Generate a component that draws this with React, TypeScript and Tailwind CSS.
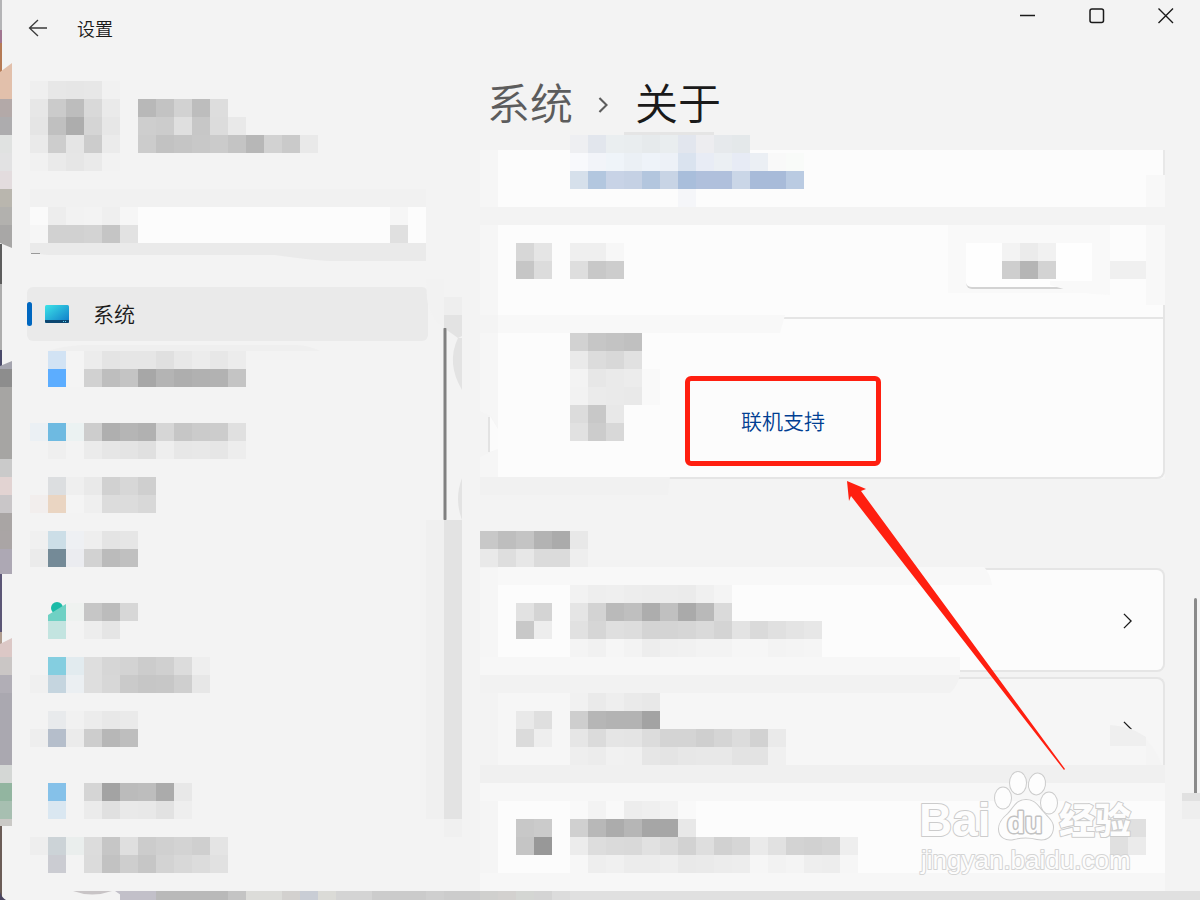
import React from "react";

const CELL = 18;

function Mosaic({ rows, className = "" }: { rows: string[]; className?: string }) {
  const grid = rows.map((row) => row.split(" ").filter(Boolean));
  const columns = Math.max(1, ...grid.map((row) => row.length));
  return (
    <svg
      aria-hidden="true"
      width={columns * CELL}
      height={rows.length * CELL}
      shapeRendering="crispEdges"
      className={`block shrink-0 ${className}`}
    >
      {grid.map((row, y) =>
        row.map((token, x) =>
          token === ".." ? null : (
            <rect
              key={`${x}-${y}`}
              x={x * CELL}
              y={y * CELL}
              width={CELL}
              height={CELL}
              fill={token.length === 2 ? `#${token}${token}${token}` : `#${token}`}
            />
          ),
        ),
      )}
    </svg>
  );
}

const navItems: string[][] = [
  [
    ".. d2e3f4 f4 ec e4 e6 e6 e0 e8 ec e7 ec",
    ".. 5cadff f4 d1 be c4 a7 b4 ae b1 b2 c4",
    "",
    "",
  ],
  [
    "ebf0f4 6ebae1 ebf2f2 cd af b5 b1 d6 c6 cb cc e0",
    ".. ef .. eb e6 e4 e0 ee e7 e8 e6 ed",
    "",
  ],
  [".. dcdee0 ef e9 d1 d7 cf", "f2eeed ead5c2 f4 ef dc dc d8", ""],
  ["f0 ccdee7 eef0f3 ee e4 e6", "eb 748a97 ebecf0 d2 bb c0", "", ""],
  [".. .. eff2f0 c6 bc d7", ".. c3e4e0 .. ed e5", ""],
  [
    ".. 84cee0 e2ebef de d6 d3 cc d0 dc ee",
    "f0 c5d5df ebeff2 de d7 ca c6 c7 cf e7",
    "",
  ],
  [".. e8eaec f1 ec e8 ea", "ee b5becb eb cd b7 be", "", ""],
  [".. 85c1e9 .. d5 a3 bb bd ab e8", ".. dae7f1 .. eb e0 e9 e8 e2 ee", ""],
  [
    "ee ccd3d7 eaeeed dc c6 df cc d0 d3 cf e4",
    ".. cbccd2 .. db c2 ce c6 d3 d8 dc e1",
    "",
  ],
];

function DesktopEdge() {
  const blocks: [number, number, string][] = [
    [99, 117, "#b3a9a8"],
    [117, 135, "#adacae"],
    [135, 153, "#e0e2e1"],
    [153, 171, "#e2e2e3"],
    [171, 189, "#e3dcde"],
    [189, 207, "#b9b6ae"],
    [207, 225, "#b2b1ae"],
    [369, 387, "#8d8d8d"],
    [387, 459, "#a6a5a3"],
    [459, 477, "#cacaca"],
    [477, 495, "#e2d3d2"],
    [495, 513, "#c9c6c8"],
    [513, 531, "#a9a5a4"],
    [531, 549, "#aaa5a5"],
    [549, 574, "#ada8b4"],
    [657, 675, "#cac6c5"],
    [675, 693, "#b1aeb6"],
    [693, 765, "#aaa8b0"],
    [765, 783, "#d4d7d5"],
    [783, 801, "#92b5a0"],
    [801, 819, "#a7bfb1"],
    [819, 826, "#cac9c6"],
  ];
  const slivers: [number, number, string][] = [
    [0, 30, "#b4b4b6"],
    [30, 43, "#a07590"],
    [43, 72, "#b57a55"],
    [244, 284, "#5d5d5d"],
    [284, 350, "#adadad"],
    [350, 366, "#4a4a6a"],
    [574, 632, "#5b5676"],
    [632, 645, "#b09d90"],
    [826, 900, "#6b5c56"],
  ];
  return (
    <svg aria-hidden="true" width="14" height="900" className="absolute left-0 top-0">
      {slivers.map(([a, b, c]) => (
        <rect key={a} x="0" y={a} width="2" height={b - a} fill={c} />
      ))}
      {blocks.map(([a, b, c]) => (
        <rect key={a} x="0" y={a} width="12" height={b - a} fill={c} />
      ))}
      <path d="M0 72L12 63V99H0z" fill="#e2c0ab" />
      <path d="M0 225H12V248L0 243z" fill="#a8a7a6" />
      <path d="M0 366L12 361V369H0z" fill="#a4a4ae" />
      <path d="M0 644L12 638V657H0z" fill="#dcc8c6" />
      <path d="M0 892Q2 898 6 900H0z" fill="#4a4560" />
    </svg>
  );
}

function Chevron({
  className = "",
  strokeWidth = 1.5,
}: {
  className?: string;
  strokeWidth?: number;
}) {
  return (
    <svg
      aria-hidden="true"
      viewBox="0 0 10 18"
      fill="none"
      stroke="currentColor"
      strokeWidth={strokeWidth}
      className={`block ${className}`}
    >
      <path d="M1 1l8 8-8 8" />
    </svg>
  );
}

function Sidebar() {
  return (
    <aside className="w-[414px] shrink-0 pt-6">
      <div className="flex gap-[18px] pl-[18px]">
        <Mosaic
          rows={[
            "ef e7 e6 e7 f1",
            "e7 cb bd d9 ea",
            "e5 c0 ad d5 e7",
            "ea cd e5 cc eb",
            "f1 ea e6 ea f2",
          ]}
        />
        <Mosaic
          className="mt-[18px]"
          rows={[
            "b8 c3 d2 bd dd",
            "ce cc df c7 dc e9",
            "cc c2 c5 c8 cb c4 b7 d2 ca e9",
          ]}
        />
      </div>

      <div className="mt-[18px] pl-[18px]">
        <div className="h-[18px] bg-[#f1f1f1]" />
        <div className="relative h-9">
          <input
            type="text"
            aria-label="搜索"
            className="block h-full w-full bg-[#fcfcfc] px-3 text-base outline-none"
          />
          <Mosaic
            className="pointer-events-none absolute left-0 top-0"
            rows={["fa ed f2 f3 ef f6", "f6 d1 d1 d3 c5 e2"]}
          />
          <Mosaic
            className="pointer-events-none absolute right-[18px] top-0"
            rows={["f6", "e0"]}
          />
        </div>
        <svg
          aria-hidden="true"
          viewBox="0 0 396 18"
          preserveAspectRatio="none"
          className="block h-[18px] w-full"
        >
          <path d="M0 0H396V18H300Q280 17 245 12H18L0 10z" fill="#eaeaea" />
          <path d="M1 10.500H10" stroke="#999" />
        </svg>
      </div>

      <nav className="mt-[26px]">
        <a
          href="#system"
          className="-mr-0.5 ml-[15px] flex h-[54px] items-center rounded-md bg-[#eaeaea] text-[21px] text-[#1a1a1a]"
        >
          <span className="h-6 w-[5px] rounded-full bg-[#0067c0]" />
          <svg aria-hidden="true" viewBox="0 0 24 18" className="ml-[13px] h-[18px] w-6">
            <defs>
              <linearGradient id="screen" x1="0" y1="0" x2="1" y2="1">
                <stop offset="0" stopColor="#3ce4e8" />
                <stop offset="1" stopColor="#0f78c8" />
              </linearGradient>
            </defs>
            <rect width="24" height="18" rx="1.500" fill="url(#screen)" />
            <path d="M0 15h24v1.500q0 1.500-1.500 1.500h-21Q0 18 0 16.500z" fill="#0b4670" />
            <path d="M18 16.500h1m1 0h1" stroke="#5fd0ee" />
          </svg>
          <span className="ml-6 pt-0.5">系统</span>
        </a>
        <div className="relative mt-[10px] pl-[18px]">
          <svg
            aria-hidden="true"
            width="280"
            height="6"
            className="absolute -top-[6px] left-9"
          >
            <path d="M0 6Q14 1 36 0H250Q262 1 272 6z" fill="#efefef" />
          </svg>
          {navItems.map((rows, index) => (
            <a
              key={index}
              href={`#section-${index + 2}`}
              aria-label={`设置 ${index + 2}`}
              className="relative block"
            >
              <Mosaic rows={rows} />
              {index === 4 && (
                <svg
                  aria-hidden="true"
                  width="18"
                  height="20"
                  className="absolute -top-[2px] left-[18px]"
                >
                  <circle cx="9" cy="7" r="6" fill="#1abba7" />
                  <path d="M0 14L18 3V20H0z" fill="#6fd1c4" />
                </svg>
              )}
            </a>
          ))}
        </div>
      </nav>
    </aside>
  );
}

function SidebarScrollbar() {
  return (
    <svg
      aria-hidden="true"
      width="36"
      height="558"
      className="mt-[222px] block shrink-0"
    >
      <path d="M0 0H18V49Q4 40 1 20z" fill="#f2f2f2" />
      <rect x="18" y="18" width="18" height="18" fill="#eeeeee" />
      <path d="M18 36H36V57L32 59L18 49z" fill="#e3e3e3" />
      <path d="M36 59V111Q20 84 32 59z" fill="#e3e3e3" />
      <path d="M36 199V241Q28 220 36 199z" fill="#e3e3e3" />
      <rect x="17" y="49" width="4" height="192" rx="1" fill="#b9b9b9" />
      <rect x="18" y="49" width="2" height="192" fill="#808080" />
      <rect x="0" y="241" width="18" height="299" fill="#f0f0f0" />
      <rect x="18" y="241" width="18" height="299" fill="#e3e3e3" />
      <rect x="18" y="540" width="18" height="18" fill="#f0f0f0" />
    </svg>
  );
}

function AboutCards() {
  return (
    <>
      <section className="relative mt-[14px] flex h-[57px] bg-[#f6f6f6] pl-[18px]">
        <div className="flex-1 border-r-2 border-[#e8e8e8] bg-[#fcfcfc] pl-[72px]">
          <Mosaic
            className="-mt-[15px]"
            rows={[
              "eeeff2 e2e6ed eaeef0 e9edef e6eaec e9edef e2e6ee ededf0 e6e9ec e4e8ea",
              "f8f9fc f2f4f9 eff4f9 ebf0f5 eef3f9 edf1f7 dae3ef e8ecf5 ebeff3 e7ebf5 ebeff4 f9f9f9 f9fbf9",
              "d6e0eb b3c7df c8d3e6 c5d1e4 b3c6de c8d4e5 a9bedb b0c0dc b0c0dc cad6e7 a8bbd9 a8bbd9 bacbe2",
              ".. .. .. .. .. .. f5f6f9",
            ]}
          />
        </div>
        <div className="absolute -top-[18px] left-36 h-[3px] w-[90px] bg-[#e5e5e5]" />
        <div className="absolute bottom-0 right-0 h-8 w-[19px] bg-[#f8f8f8]" />
      </section>

      <section className="relative mt-[18px] bg-[#f6f6f6] pl-[18px]">
        <div className="rounded-br-lg border-b-2 border-r-2 border-[#e5e5e5] bg-[#fcfcfc]">
          <div className="relative flex h-[92px] items-start pl-[18px] pt-[18px]">
            <Mosaic rows={["d7 e5", "c6 dc"]} />
            <Mosaic className="ml-[18px]" rows={["ef ef f7", "de c8 cd"]} />
            <div className="-mt-[18px] ml-auto mr-[53px] bg-[#f9f9f9] px-[18px] pb-1 pt-[18px]">
              <button
                type="button"
                aria-label="复制"
                className="flex h-[46px] w-[126px] items-start justify-center rounded-bl-md border-b-2 border-[#d3d3d3] bg-[#fefefe]"
              >
                <Mosaic rows={["f3 eb f1", "ce b5 d3"]} />
              </button>
            </div>
            <svg
              aria-hidden="true"
              width="60"
              height="14"
              className="absolute bottom-[22px] right-[53px]"
            >
              <path d="M0 4Q26 13 60 14V0H0z" fill="#f9f9f9" />
            </svg>
            <div className="absolute right-[17px] top-9 h-[18px] w-9 bg-[#f0f0f0]" />
          </div>
          <div className="flex h-[160px] border-t-2 border-[#e5e5e5]">
            <Mosaic
              className="ml-[72px] mt-[14px]"
              rows={[
                "d2 c6 c3 c0",
                "ea dc d8 e1",
                "f3 e7 ea ec f9",
                "f2 eb ea e9 f9",
                "dc c8 e8",
                "e1 cc d8",
              ]}
            />
            <div className="ml-[25px] mt-[57px] flex h-[90px] w-[196px] items-center justify-center rounded-md border-[5px] border-[#ff1f10] pt-0.5 text-[21px] text-[#003e92]">
              <a href="#online-support">联机支持</a>
            </div>
          </div>
        </div>
        <svg
          aria-hidden="true"
          width="306"
          height="18"
          className="absolute left-0 top-[90px]"
        >
          <path d="M0 0H305L300 18H0z" fill="#f8f8f8" />
          <path d="M0 0H18V18H0z" fill="#f4f4f4" />
        </svg>
        <svg
          aria-hidden="true"
          width="18"
          height="46"
          className="absolute left-0 top-[186px]"
        >
          <path d="M0 0L11 5L18 18V38L0 46z" fill="#f4f4f4" />
          <path d="M10 5L18 18V38L10 41z" fill="#fbfbfb" />
          <path d="M9 6V41" stroke="#e3e3e3" strokeWidth="2" />
        </svg>
        <svg
          aria-hidden="true"
          width="190"
          height="18"
          className="absolute left-0 top-[252px]"
        >
          <path d="M0 0H190L188 18H0z" fill="#f1f1f1" />
        </svg>
        <div className="absolute right-0 top-0 h-20 w-[19px] bg-[#f8f8f8]" />
      </section>
    </>
  );
}

function RelatedSettings() {
  return (
    <section>
      <h2 className="mt-[52px]">
        <Mosaic rows={["c8 be c4 b3 ab e8", "e9 de e7 db db ee"]} />
      </h2>

      <a
        href="#product-key"
        aria-label="产品密钥"
        className="relative mt-px flex h-[104px] bg-[#f6f6f6] pl-[18px]"
      >
        <span className="absolute inset-y-0 right-0 w-2 bg-[#f3f3f3]" />
        <span className="relative flex flex-1 items-start rounded-r-lg border-2 border-l-0 border-[#e5e5e5] bg-[#fcfcfc] pl-[18px] pt-[15px]">
          <Mosaic className="mt-[18px]" rows={["e2 d4", "c8 ed"]} />
          <Mosaic
            className="ml-[18px]"
            rows={[
              "f2 ee ef ed ec ec eb f0 f4",
              "e5 d3 ba bf ad c0 aa b9 da",
              "e1 d6 df dd d4 d4 d6 da d4 e3 da e0 e4 e7",
              "f4 f1 f6 f3 ed f0 f1 f3 f3 f6 f6 f3 f4 f5",
            ]}
          />
          <Chevron className="ml-auto mr-[31px] mt-7 h-4 w-[9px] text-[#1a1a1a]" />
        </span>
        <svg
          aria-hidden="true"
          width="512"
          height="18"
          className="absolute -top-px left-0"
        >
          <path d="M18 0H504Q510 6 512 18H18z" fill="#f8f8f8" />
        </svg>
        <svg
          aria-hidden="true"
          width="480"
          height="36"
          className="absolute left-0 top-[89px] z-10"
        >
          <path d="M0 0H480V18H0z" fill="#f7f7f7" />
          <path d="M0 18H480Q477 30 470 36H0z" fill="#f2f2f2" />
        </svg>
      </a>

      <a
        href="#remote-desktop"
        aria-label="远程桌面"
        className="relative mt-[5px] flex h-[106px] bg-[#f3f3f3] pl-[18px]"
      >
        <span className="flex flex-1 items-start rounded-tr-lg border-r-2 border-t-2 border-[#e5e5e5] bg-[#f6f6f6] pl-[18px] pt-[14px]">
          <Mosaic className="mt-[18px]" rows={["e9 df", "db ee"]} />
          <Mosaic
            className="ml-[18px]"
            rows={[
              "f1 ea ee ea e8",
              "ce b6 b3 b3 a3",
              "e6 db e5 e4 dc d4 d4 cf d5 dc d2 ea",
              "ee ec f1 f0 e6 e4 e7 e8 e8 e3 e3 f0",
            ]}
          />
          <Chevron className="ml-auto mr-[31px] mt-7 h-4 w-[9px] text-[#1a1a1a]" />
        </span>
        <svg
          aria-hidden="true"
          width="56"
          height="70"
          className="absolute bottom-0 right-0"
        >
          <path d="M1 20H37V58H1z" fill="#f6f6f6" />
          <path d="M1 12Q43 14 56 62V70H37V33H1z" fill="#f4f4f4" />
          <path d="M1 12Q21 13 37 24V33H1z" fill="#efefef" />
        </svg>
        <span className="absolute inset-x-0 bottom-0 h-[18px] bg-[#f0f0f0]" />
      </a>

      <a
        href="#device-manager"
        aria-label="设备管理器"
        className="flex border-y-[18px] border-[#f7f7f7] bg-[#f5f5f5] pl-[18px]"
      >
        <span className="flex flex-1 items-start bg-[#fcfcfc] pl-[18px] pr-[19px]">
          <Mosaic className="mt-[18px]" rows={["c8 cb", "c5 98"]} />
          <Mosaic
            className="ml-[18px]"
            rows={[
              "f9 f3 f9 ed ef f2 f9",
              "d0 b8 ac b6 a6 a6 e8",
              "ec dd da d9 e1 db d2 de d1 d6 ea e1 d3 d1 d4 ee",
              "f7 ee f0 ec ec ee e9 ea ec ed f6 f2 f4 ee ed f6",
            ]}
          />
          <Mosaic className="ml-auto mt-[18px]" rows={["df e0", "e0 eb"]} />
        </span>
      </a>
    </section>
  );
}

function Watermark() {
  return (
    <svg
      aria-label="Baidu 经验"
      role="img"
      width="230"
      height="115"
      className="pointer-events-none absolute bottom-5 right-[55px]"
    >
      <g
        fill="#fdfdfd"
        stroke="#cccccc"
        strokeWidth="2"
        strokeLinejoin="round"
        paintOrder="stroke"
        fontFamily='"Liberation Sans", "Noto Sans CJK SC", sans-serif'
        fontWeight="700"
      >
        <text x="4" y="71" fontSize="46">
          Bai
        </text>
        <ellipse cx="88" cy="33" rx="8" ry="10.500" />
        <ellipse cx="103" cy="18" rx="8" ry="11" />
        <ellipse cx="122" cy="19" rx="8" ry="10.500" transform="rotate(10 122 19)" />
        <ellipse cx="134" cy="38" rx="8" ry="10.500" />
        <path d="M111 35C101 35 99 43 93 49C87 54 84 58 84 64C84 72 91 76 99 74Q111 71 122 74C132 76 138 71 138 62C138 56 133 53 129 48C123 42 121 35 111 35z" />
        <text x="92" y="68" fontSize="29" stroke="#c2c2c2" strokeWidth="3">
          du
        </text>
        <text x="144" y="69" fontSize="36" fontWeight="900">
          经验
        </text>
        <text x="6" y="104" fontSize="26" fontWeight="400" stroke="#d4d4d4">
          jingyan.baidu.com
        </text>
      </g>
    </svg>
  );
}

export default function App() {
  return (
    <div className="relative flex min-h-screen flex-col overflow-hidden bg-[#f3f3f3] pl-3 font-['Liberation_Sans','Noto_Sans_CJK_SC',sans-serif] font-[350]">
      <DesktopEdge />
      <header className="flex h-[57px] items-start">
        <button type="button" aria-label="返回" className="ml-4 mt-[18px] h-5 w-5">
          <svg
            aria-hidden="true"
            viewBox="0 0 20 20"
            fill="none"
            stroke="#3a3a3a"
            strokeWidth="1.300"
            className="block h-5 w-5"
          >
            <path d="M19 10H1.500M10 2L1.500 10l8.500 8" />
          </svg>
        </button>
        <span className="ml-[29px] mt-4 text-lg leading-7 text-[#1a1a1a]">设置</span>
        <div className="ml-auto mr-[26px] mt-2 flex gap-[53px] text-[#1a1a1a]">
          <button type="button" aria-label="最小化">
            <svg width="16" height="16" fill="none" stroke="currentColor" strokeWidth="1.500">
              <path d="M0 7.500H15" />
            </svg>
          </button>
          <button type="button" aria-label="最大化">
            <svg width="16" height="16" fill="none" stroke="currentColor" strokeWidth="1.500">
              <rect x="1" y="1" width="13.500" height="13.500" rx="2" />
            </svg>
          </button>
          <button type="button" aria-label="关闭">
            <svg width="16" height="16" fill="none" stroke="currentColor" strokeWidth="1.400">
              <path d="M.5.5l14.500 14.500M15 .5L.5 15" />
            </svg>
          </button>
        </div>
      </header>

      <div className="flex flex-1 items-start">
        <Sidebar />
        <SidebarScrollbar />
        <main className="relative ml-[18px] min-w-0 flex-1">
          <h1 className="mt-4 flex h-[63px] items-center pl-[7px] text-[43px] font-[350] leading-[63px]">
            <a href="#system" className="pt-0.5 text-[#5c5c5c]">
              系统
            </a>
            <Chevron
              strokeWidth={2.4}
              className="ml-[25px] h-4 w-[10px] text-[#5c5c5c]"
            />
            <span className="ml-[27px] pt-0.5 text-[#1a1a1a]">关于</span>
          </h1>
          <AboutCards />
          <RelatedSettings />
          <svg
            aria-hidden="true"
            width="220"
            height="292"
            className="pointer-events-none absolute left-[367px] top-[424px] z-20"
          >
            <path d="M0 0L19 8L14 10L218 288L217 289L4 15L2 20z" fill="#ff1f10" />
          </svg>
        </main>
        <div aria-hidden="true" className="w-[35px] shrink-0 self-stretch pt-[541px]">
          <div className="ml-[29px] h-[195px] w-[3px] rounded-t-full bg-[#8a8a8a]" />
          <div className="ml-[17px] h-2 bg-[#e1e1e1]" />
          <div className="ml-[17px] h-[18px] bg-[#eeeeee]" />
        </div>
      </div>

      <footer className="relative flex h-[9px] overflow-hidden bg-[#f3f3f3]">
        <svg
          aria-hidden="true"
          width="120"
          height="9"
          className="absolute left-0 top-0"
        >
          <path d="M61 0H100Q80 7 61 0z" fill="#c8c4c6" />
          <path d="M103 0H120V9H118Q111 6 103 0z" fill="#c2c0c9" />
        </svg>
        <Mosaic
          className="ml-[108px]"
          rows={[
            "c2c0c9 c2c0c9 b9 b9 b9 b9 c4 dcdcd9 dcdcd9 d3d1cf c9cdd5 dbdbd7 d4 d4 cc cb cb cf cc cc d0d0ce d3d1cf d4d6d3 d4 dc",
          ]}
        />
        <div className="flex-1 bg-[#e0e0e0]" />
      </footer>
      <Watermark />
    </div>
  );
}
